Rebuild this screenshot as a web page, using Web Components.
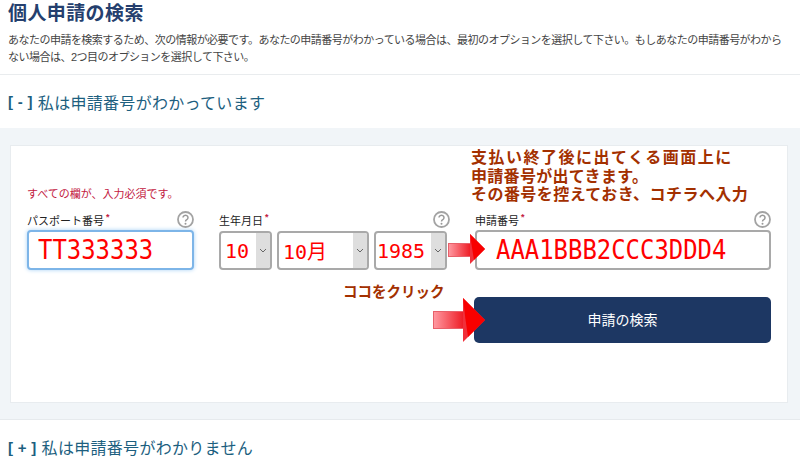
<!DOCTYPE html>
<html lang="ja">
<head>
<meta charset="utf-8">
<title>個人申請の検索</title>
<style>
html, body { margin: 0; padding: 0; background: #fff; }
body { width: 800px; height: 460px; overflow: hidden; font-family: "Liberation Sans", "Noto Sans CJK JP", sans-serif; }
</style>
</head>
<body>
<search-page>
    <page-intro heading="個人申請の検索">あなたの申請を検索するため、次の情報が必要です。あなたの申請番号がわかっている場合は、最初のオプションを選択して下さい。もしあなたの申請番号がわからない場合は、2つ目のオプションを選択して下さい。</page-intro>
    <toggle-heading mark="-">私は申請番号がわかっています</toggle-heading>
    <search-panel>
        <form-field label="パスポート番号" style="width:167px">
            <text-box focused>TT333333</text-box>
        </form-field>
        <form-field label="生年月日" style="width:231px">
            <div style="display:flex;gap:5px">
                <select-box style="width:53px">10</select-box>
                <select-box style="width:92px">10月</select-box>
                <select-box style="width:73px" tight>1985</select-box>
            </div>
        </form-field>
        <form-field label="申請番号" style="width:296px">
            <text-box wide>AAA1BBB2CCC3DDD4</text-box>
        </form-field>
    </search-panel>
    <toggle-heading mark="+" low>私は申請番号がわかりません</toggle-heading>
</search-page>

<script>
class SearchPage extends HTMLElement {
    constructor() {
        super();
        this.attachShadow({mode: 'open'}).innerHTML = `
        <style>
        :host { display: block; width: 800px; height: 460px; overflow: hidden; color: #333; }
        </style>
        <slot></slot>`;
    }
}

class PageIntro extends HTMLElement {
    constructor() {
        super();
        this.attachShadow({mode: 'open'}).innerHTML = `
        <style>
        :host { display: block; height: 75px; padding: 0 8px; box-sizing: border-box; border-bottom: 1px solid #e9ecee; }
        h1 { margin: 0; padding-top: 2px; font-size: 19px; line-height: 24px; font-weight: 700; color: #253f6e; letter-spacing: .4px; }
        p { margin: 6px 0 0; width: 776px; font-size: 11px; line-height: 17px; color: #444; letter-spacing: -.52px; }
        </style>
        <h1></h1>
        <p><slot></slot></p>`;
        this.shadowRoot.querySelector('h1').textContent = this.getAttribute('heading');
    }
}

class ToggleHeading extends HTMLElement {
    constructor() {
        super();
        this.attachShadow({mode: 'open'}).innerHTML = `
        <style>
        :host { display: flex; align-items: center; gap: 5px; height: 53px; padding: 0 8px; box-sizing: border-box; font-size: 16px; color: #1d5f7f; letter-spacing: .3px; }
        :host([low]) { height: 40px; padding-top: 14px; }
        b { color: #1d5f7f; font-size: 15px; white-space: pre; }
        </style>
        <b></b><span><slot></slot></span>`;
        this.shadowRoot.querySelector('b').textContent = '[ ' + this.getAttribute('mark') + ' ]';
    }
}

class SearchPanel extends HTMLElement {
    constructor() {
        super();
        this.attachShadow({mode: 'open'}).innerHTML = `
        <style>
        :host { display: block; height: 292px; padding: 17px 12px 17px 10px; box-sizing: border-box; background: #f1f5f8; border-bottom: 1px solid #e6eaed; }
        .card { position: relative; height: 258px; padding: 40px 16px 0; box-sizing: border-box; background: #fff; border: 1px solid #e8ecef; }
        .req { font-size: 11px; line-height: 16px; color: #c3203f; }
        .row { display: flex; gap: 25px; margin-top: 8px; }
        .go { display: flex; justify-content: flex-end; margin: 27px 0 0; width: 744px; }
        button { width: 297px; height: 46px; padding: 0 0 2px; border: 0; border-radius: 5px; background: #1d3763; color: #fff; font: 14px "Liberation Sans", "Noto Sans CJK JP", sans-serif; }
        .note { position: absolute; left: 460px; top: 3px; font-size: 16px; line-height: 18.5px; font-weight: 700; color: #a33000; white-space: nowrap; }
        .note span { display: block; }
        .click { position: absolute; left: 332px; top: 135px; font-size: 14.5px; line-height: 22px; font-weight: 700; color: #a33000; white-space: nowrap; }
        svg { position: absolute; }
        </style>
        <div class="card">
            <div class="req">すべての欄が、入力必須です。</div>
            <div class="row"><slot></slot></div>
            <div class="go"><button type="button">申請の検索</button></div>
            <div class="note">
                <span style="letter-spacing:1.5px">支払い終了後に出てくる画面上に</span>
                <span style="letter-spacing:.3px">申請番号が出てきます。</span>
                <span style="letter-spacing:.45px">その番号を控えておき、コチラへ入力</span>
            </div>
            <div class="click">ココをクリック</div>
            <svg style="left:437px;top:88px" width="38" height="31" viewBox="0 0 38 31">
                <defs><linearGradient id="a"><stop offset="0" stop-color="#ff9aa2"/><stop offset="1" stop-color="#ee1c25"/></linearGradient></defs>
                <rect x=".5" y="9.5" width="22" height="13" fill="url(#a)" stroke="#e8606a"/>
                <path d="M22 0 L37 15 L22 30 Z" fill="#f0303a"/>
                <path d="M22 0 L37 15 L26 26 Q24 14 22 0 Z" fill="#f80000"/>
            </svg>
            <svg style="left:422px;top:152px" width="54" height="46" viewBox="0 0 54 46">
                <defs><linearGradient id="b"><stop offset="0" stop-color="#ff9aa2"/><stop offset="1" stop-color="#ee1c25"/></linearGradient></defs>
                <rect x=".5" y="13.5" width="30" height="17" fill="url(#b)" stroke="#e8606a"/>
                <path d="M30 0 L52 22 L30 44 Z" fill="#f0303a"/>
                <path d="M30 0 L52 22 L35 39 Q32 20 30 0 Z" fill="#f80000"/>
            </svg>
        </div>`;
    }
}

class FormField extends HTMLElement {
    constructor() {
        super();
        this.attachShadow({mode: 'open'}).innerHTML = `
        <style>
        :host { display: block; flex: none; }
        .top { display: flex; justify-content: space-between; align-items: center; height: 19px; margin-bottom: 1px; font-size: 11px; color: #222; }
        sup { color: #c3203f; font-size: 9px; font-weight: 700; line-height: 0; margin-left: 2px; }
        svg { display: block; }
        </style>
        <div class="top">
            <span><span class="text"></span><sup>*</sup></span>
            <svg width="17" height="17" viewBox="0 0 17 17">
                <circle cx="8.5" cy="8.5" r="7.5" fill="#fff" stroke="#a3a3a3" stroke-width="1.8"/>
                <path d="M6 6.6a2.5 2.4 0 1 1 3.8 2.1c-.9.5-1.3 1-1.3 1.9" fill="none" stroke="#999" stroke-width="1.5"/>
                <circle cx="8.5" cy="12.8" r="1" fill="#999"/>
            </svg>
        </div>
        <slot></slot>`;
        this.shadowRoot.querySelector('.text').textContent = this.getAttribute('label');
    }
}

class TextBox extends HTMLElement {
    constructor() {
        super();
        this.attachShadow({mode: 'open'}).innerHTML = `
        <style>
        :host { display: flex; align-items: center; height: 40px; padding-left: 9px; box-sizing: border-box; background: #fff; border: 2px solid #a9a9a9; border-radius: 4px; color: #f00; font: 26px "DejaVu Sans Mono", monospace; }
        :host([focused]) { border-color: #7db5e8; box-shadow: 0 0 4px #a9d2f5; }
        :host([wide]) { padding-left: 19px; }
        span { display: inline-block; transform: scaleX(.92); transform-origin: left center; white-space: nowrap; }
        </style>
        <span><slot></slot></span>`;
    }
}

class SelectBox extends HTMLElement {
    constructor() {
        super();
        this.attachShadow({mode: 'open'}).innerHTML = `
        <style>
        :host { display: flex; flex: none; height: 39px; margin-top: 1px; box-sizing: border-box; background: #fff; border: 2px solid #a9a9a9; border-radius: 4px; overflow: hidden; color: #f00; font: 20px "DejaVu Sans Mono", "Noto Sans CJK JP", monospace; }
        .val { flex: 1; display: flex; align-items: center; padding-left: 4px; white-space: nowrap; overflow: hidden; }
        :host([tight]) .val { padding-left: 1px; }
        .arr { flex: none; width: 14px; display: flex; align-items: center; justify-content: center; background: #dedede; }
        </style>
        <div class="val"><slot></slot></div>
        <div class="arr"><svg width="8" height="5" viewBox="0 0 8 5"><path d="M1 1l3 3 3-3" fill="none" stroke="#666" stroke-width="1"/></svg></div>`;
    }
}

customElements.define('search-page', SearchPage);
customElements.define('page-intro', PageIntro);
customElements.define('toggle-heading', ToggleHeading);
customElements.define('search-panel', SearchPanel);
customElements.define('form-field', FormField);
customElements.define('text-box', TextBox);
customElements.define('select-box', SelectBox);
</script>
</body>
</html>
